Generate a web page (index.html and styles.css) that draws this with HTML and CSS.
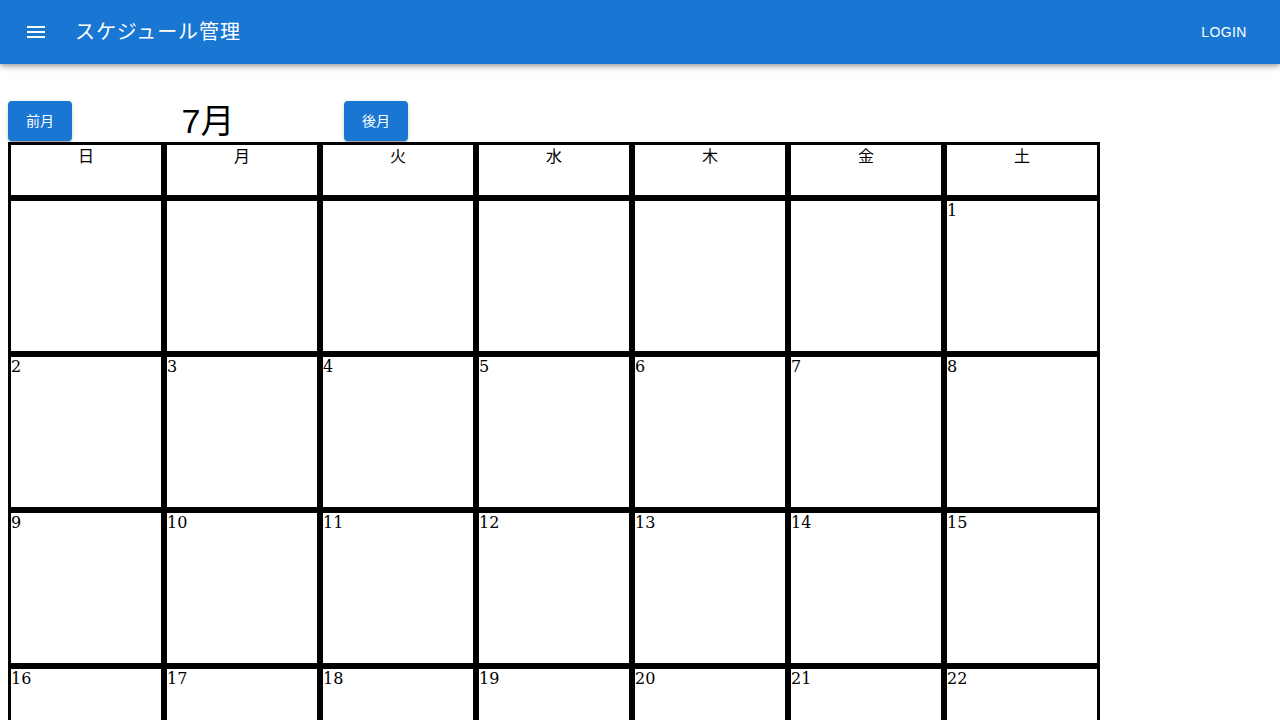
FILE: index.html
```html
<!DOCTYPE html>
<html lang="ja">
<head>
<meta charset="utf-8">
<title>スケジュール管理</title>
<link rel="stylesheet" href="styles.css">
</head>
<body>
<header class="appbar">
  <button class="icon-btn" aria-label="menu">
    <svg viewBox="0 0 24 24" width="24" height="24"><path fill="#fff" d="M3 18h18v-2H3v2zm0-5h18v-2H3v2zm0-7v2h18V6H3z"/></svg>
  </button>
  <div class="app-title">スケジュール管理</div>
  <div class="spacer"></div>
  <button class="login-btn">Login</button>
</header>
<main class="content">
  <div class="month-bar">
    <button class="nav-btn">前月</button>
    <div class="month-title">7月</div>
    <button class="nav-btn">後月</button>
  </div>
  <div class="calendar">
    <div class="cell head">日</div>
    <div class="cell head">月</div>
    <div class="cell head">火</div>
    <div class="cell head">水</div>
    <div class="cell head">木</div>
    <div class="cell head">金</div>
    <div class="cell head">土</div>

    <div class="cell day"></div>
    <div class="cell day"></div>
    <div class="cell day"></div>
    <div class="cell day"></div>
    <div class="cell day"></div>
    <div class="cell day"></div>
    <div class="cell day">1</div>

    <div class="cell day">2</div>
    <div class="cell day">3</div>
    <div class="cell day">4</div>
    <div class="cell day">5</div>
    <div class="cell day">6</div>
    <div class="cell day">7</div>
    <div class="cell day">8</div>

    <div class="cell day">9</div>
    <div class="cell day">10</div>
    <div class="cell day">11</div>
    <div class="cell day">12</div>
    <div class="cell day">13</div>
    <div class="cell day">14</div>
    <div class="cell day">15</div>

    <div class="cell day">16</div>
    <div class="cell day">17</div>
    <div class="cell day">18</div>
    <div class="cell day">19</div>
    <div class="cell day">20</div>
    <div class="cell day">21</div>
    <div class="cell day">22</div>

    <div class="cell day">23</div>
    <div class="cell day">24</div>
    <div class="cell day">25</div>
    <div class="cell day">26</div>
    <div class="cell day">27</div>
    <div class="cell day">28</div>
    <div class="cell day">29</div>

    <div class="cell day">30</div>
    <div class="cell day">31</div>
    <div class="cell day"></div>
    <div class="cell day"></div>
    <div class="cell day"></div>
    <div class="cell day"></div>
    <div class="cell day"></div>
  </div>
</main>
</body>
</html>
```
FILE: styles.css
```css
html, body {
  margin: 0;
  padding: 0;
  background: #fff;
}

body {
  font-family: "DejaVu Serif", "Noto Sans CJK JP", serif;
  color: #000;
  overflow: hidden;
}

.appbar {
  height: 64px;
  background: #1976d2;
  color: #fff;
  display: flex;
  align-items: center;
  padding: 0 24px;
  box-shadow: 0 2px 4px -1px rgba(0,0,0,0.2), 0 4px 5px 0 rgba(0,0,0,0.14), 0 1px 10px 0 rgba(0,0,0,0.12);
  position: relative;
  z-index: 2;
}

.icon-btn {
  width: 24px;
  height: 24px;
  padding: 0;
  margin: 0 28px 0 0;
  border: 0;
  background: transparent;
  display: flex;
}

.app-title {
  font-family: "Liberation Sans", "Noto Sans CJK JP", sans-serif;
  font-size: 20px;
  font-weight: 400;
  letter-spacing: 0.9px;
  line-height: 1.6;
  margin-left: -1px;
}

.spacer {
  flex: 1;
}

.login-btn {
  min-width: 64px;
  height: 36px;
  padding: 6px 8px;
  border: 0;
  background: transparent;
  color: #fff;
  font-family: "Liberation Sans", "Noto Sans CJK JP", sans-serif;
  font-size: 14px;
  font-weight: 400;
  letter-spacing: 0.02857em;
  text-transform: uppercase;
}

.content {
  padding: 37px 8px 0 8px;
}

.month-bar {
  display: flex;
  height: 41px;
  align-items: flex-start;
}

.nav-btn {
  width: 64px;
  height: 40px;
  border: 0;
  border-radius: 4px;
  background: #1976d2;
  color: #fff;
  font-family: "Liberation Sans", "Noto Sans CJK JP", sans-serif;
  font-size: 14px;
  font-weight: 400;
  padding: 0 0 2px 0;
  box-shadow: 0 3px 1px -2px rgba(0,0,0,0.2), 0 2px 2px 0 rgba(0,0,0,0.14), 0 1px 5px 0 rgba(0,0,0,0.12);
}

.month-title {
  width: 272px;
  text-align: center;
  font-family: "Liberation Sans", "Noto Sans CJK JP", sans-serif;
  font-size: 34px;
  line-height: 40px;
  height: 41px;
}

.calendar {
  display: grid;
  grid-template-columns: repeat(7, 156px);
  grid-template-rows: 56px;
  grid-auto-rows: 156px;
  width: 1092px;
}

.cell {
  box-sizing: border-box;
  border: 3px solid #000;
  font-size: 16px;
}

.head {
  text-align: center;
  font-family: "Noto Sans CJK JP", sans-serif;
  line-height: 21px;
}

.day {
  text-align: left;
  line-height: 19px;
}
```
